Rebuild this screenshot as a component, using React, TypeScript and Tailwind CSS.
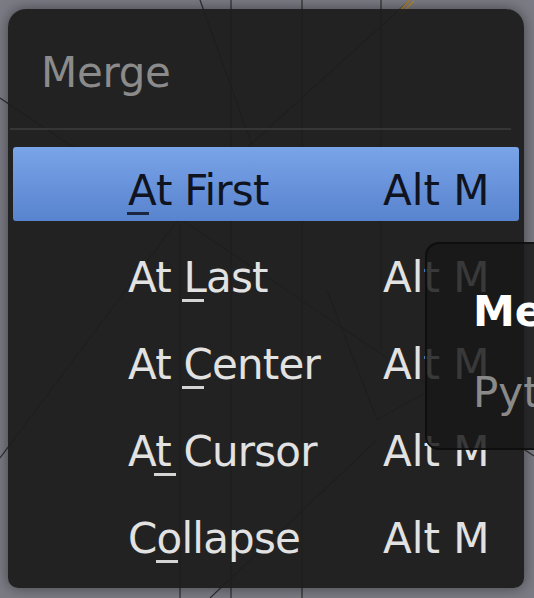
import type { ReactNode } from 'react'

type Item = {
  before: string
  key: string
  after: string
  shortcut: string
  active?: boolean
}

const items: Item[] = [
  { before: '', key: 'A', after: 't First', shortcut: 'Alt M', active: true },
  { before: 'At ', key: 'L', after: 'ast', shortcut: 'Alt M' },
  { before: 'At ', key: 'C', after: 'enter', shortcut: 'Alt M' },
  { before: 'A', key: 't', after: ' Cursor', shortcut: 'Alt M' },
  { before: 'C', key: 'o', after: 'llapse', shortcut: 'Alt M' },
]

function Mnemonic({ children, active }: { children: ReactNode; active?: boolean }) {
  return (
    <span className="relative">
      {children}
      <span
        className={`absolute left-[-1px] top-[46px] h-[3px] w-[22px] ${
          active ? 'bg-[#1b2740]' : 'bg-[#d4d4d4]'
        }`}
      />
    </span>
  )
}

function Viewport() {
  // wireframe lines of the 3D view behind the menu
  return (
    <svg className="absolute inset-0" width="534" height="598" viewBox="0 0 534 598">
      <g stroke="#1a1a1a" strokeWidth="1.2" fill="none" opacity="0.8">
        <line x1="231" y1="0" x2="231" y2="598" />
        <line x1="302" y1="0" x2="302" y2="598" />
        <line x1="381" y1="0" x2="381" y2="350" />
        <line x1="180" y1="222" x2="180" y2="598" />
        <line x1="200" y1="0" x2="252" y2="145" />
        <polyline points="0,98 185,222 383,355 534,456" />
        <polyline points="410,0 250,145 178,220 0,458" />
        <polyline points="327,290 377,420 430,390" />
        <line x1="377" y1="440" x2="210" y2="598" />
      </g>
      <g stroke="#b8862e" strokeWidth="1.5">
        <line x1="398" y1="12" x2="410" y2="0" />
        <line x1="402" y1="13" x2="414" y2="1" />
      </g>
    </svg>
  )
}

export default function App() {
  return (
    <div
      className="relative h-[598px] w-[534px] overflow-hidden bg-[#7a7b84]"
      style={{ fontFamily: '"DejaVu Sans", "Liberation Sans", sans-serif' }}
    >
      <Viewport />

      <div className="relative ml-[8px] mt-[9px] h-[579px] w-[516px] rounded-t-[18px] rounded-b-[10px] bg-[rgba(29,29,29,0.94)] shadow-[0_0_14px_rgba(0,0,0,0.45)]">
        <div className="pl-[33px] pt-[40px] text-[42px] leading-[48px] tracking-[-0.3px] text-[#8b8b8b]">Merge</div>
        <div className="ml-[2px] mr-[13px] mt-[31px] h-[2px] bg-[#363636]" />

        <div className="mt-[17px] flex flex-col gap-[13px] px-[5px]">
          {items.map((item, i) => (
            <div
              key={i}
              className={`flex h-[74px] pl-[115px] pt-[20px] text-[42px] leading-[48px] ${
                item.active
                  ? 'rounded-[3px] bg-gradient-to-b from-[#7aa4e8] to-[#5883ce] text-[#0f1420]'
                  : 'text-[#e2e2e2]'
              }`}
            >
              <span className="w-[255px] whitespace-pre tracking-[-0.8px]">
                {item.before}
                <Mnemonic active={item.active}>{item.key}</Mnemonic>
                {item.after}
              </span>
              <span className="whitespace-pre">{item.shortcut}</span>
            </div>
          ))}
        </div>
      </div>

      <div className="absolute left-[425px] top-[242px] h-[208px] w-[460px] rounded-[14px] border-2 border-[rgba(10,10,10,0.7)] bg-[rgba(24,24,24,0.84)] pl-[46px] pt-[44px] text-[42px] leading-[48px]">
        <div className="whitespace-pre font-bold text-white">Merge</div>
        <div className="mt-[33px] whitespace-pre text-[#8a8a8a]">Python: bpy.ops.mesh.merge()</div>
      </div>
    </div>
  )
}
